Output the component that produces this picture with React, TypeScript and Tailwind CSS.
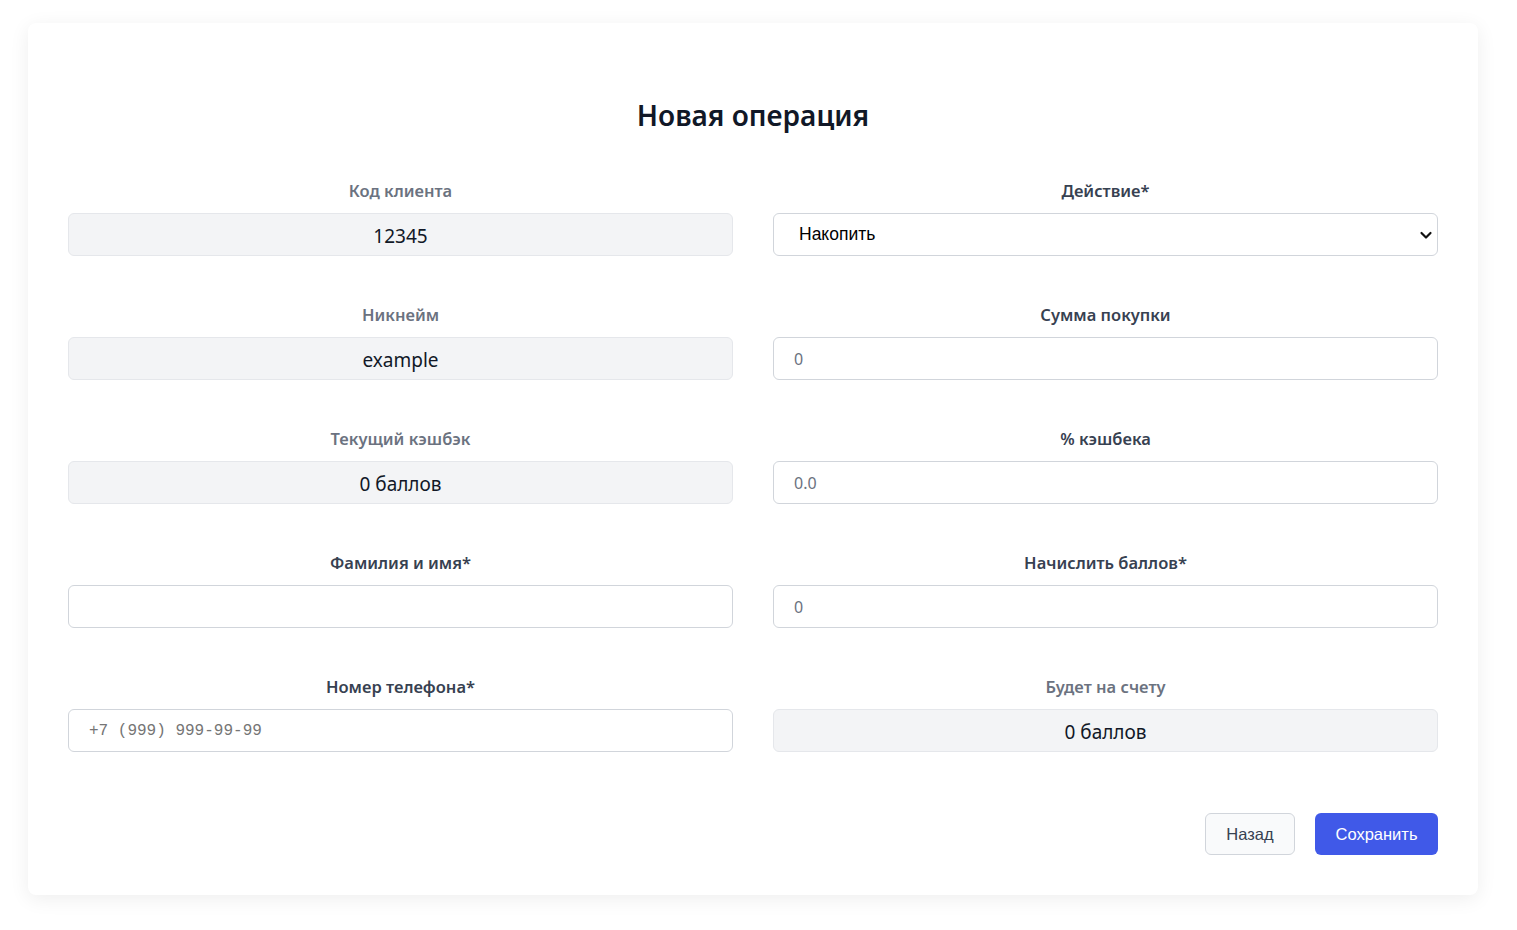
import React from 'react';

const sans = { fontFamily: '"Noto Sans", "Open Sans", sans-serif' };

function ReadonlyField({ label, value }: { label: string; value: string }) {
  return (
    <div className="flex flex-col">
      <label className="h-6 text-center text-[16.5px] leading-6 font-semibold text-[#6b7280]">{label}</label>
      <div className="mt-[10px] h-[43px] rounded-md border border-[#e5e7eb] bg-[#f3f4f6] flex items-center justify-center pt-[3px] text-[19px] text-[#111827]">
        {value}
      </div>
    </div>
  );
}

function InputField({ label, placeholder, mono }: { label: string; placeholder?: string; mono?: boolean }) {
  return (
    <div className="flex flex-col">
      <label className="h-6 text-center text-[16.5px] leading-6 font-semibold text-[#374151]">{label}</label>
      <input
        placeholder={placeholder}
        className={
          'mt-[10px] h-[43px] rounded-md border border-[#d1d5db] bg-white px-5 text-[16px] text-[#111827] outline-none ' +
          (mono
            ? 'font-["Liberation_Mono",monospace] text-[15px] placeholder:text-[#757575]'
            : 'placeholder:text-[#6b7280]')
        }
      />
    </div>
  );
}

export default function App() {
  return (
    <div className="min-h-screen bg-white px-[28px] pt-[23px]" style={sans}>
      <div className="w-[1450px] rounded-lg bg-white shadow-[0_4px_20px_rgba(0,0,0,0.07)] px-10 pt-[74px] pb-10">
        <h1 className="text-center text-[28px] leading-9 font-semibold text-[#111827]">Новая операция</h1>

        <div className="mt-[46px] grid grid-cols-2 gap-x-10 gap-y-[47px]">
          <ReadonlyField label="Код клиента" value="12345" />
          <div className="flex flex-col">
            <label className="h-6 text-center text-[16.5px] leading-6 font-semibold text-[#374151]">Действие*</label>
            <div className="relative mt-[10px]">
              <select
                defaultValue="accumulate"
                className="w-full h-[43px] appearance-none rounded-md border border-[#d1d5db] bg-white pl-[25px] pr-10 text-[17.5px] text-black outline-none font-['Liberation_Sans',Arial,sans-serif]"
              >
                <option value="accumulate">Накопить</option>
                <option value="spend">Списать</option>
              </select>
              <svg
                className="pointer-events-none absolute right-[5px] top-1/2 -translate-y-1/2"
                width="14"
                height="14"
                viewBox="0 0 14 14"
                fill="none"
              >
                <path d="M2.5 5 L7 9.5 L11.5 5" stroke="#111" strokeWidth="2.2" strokeLinecap="round" strokeLinejoin="round" />
              </svg>
            </div>
          </div>

          <ReadonlyField label="Никнейм" value="example" />
          <InputField label="Сумма покупки" placeholder="0" />

          <ReadonlyField label="Текущий кэшбэк" value="0 баллов" />
          <InputField label="% кэшбека" placeholder="0.0" />

          <InputField label="Фамилия и имя*" />
          <InputField label="Начислить баллов*" placeholder="0" />

          <InputField label="Номер телефона*" placeholder="+7 (999) 999-99-99" mono />
          <ReadonlyField label="Будет на счету" value="0 баллов" />
        </div>

        <div className="mt-[61px] flex justify-end gap-5 font-['Liberation_Sans',Arial,sans-serif] text-[16.5px]">
          <button className="h-[42px] w-[90px] rounded-md border border-[#d1d5db] bg-[#f9fafb] text-[#374151]">Назад</button>
          <button className="h-[42px] w-[123px] rounded-md bg-[#4059e8] text-white">Сохранить</button>
        </div>
      </div>
    </div>
  );
}
